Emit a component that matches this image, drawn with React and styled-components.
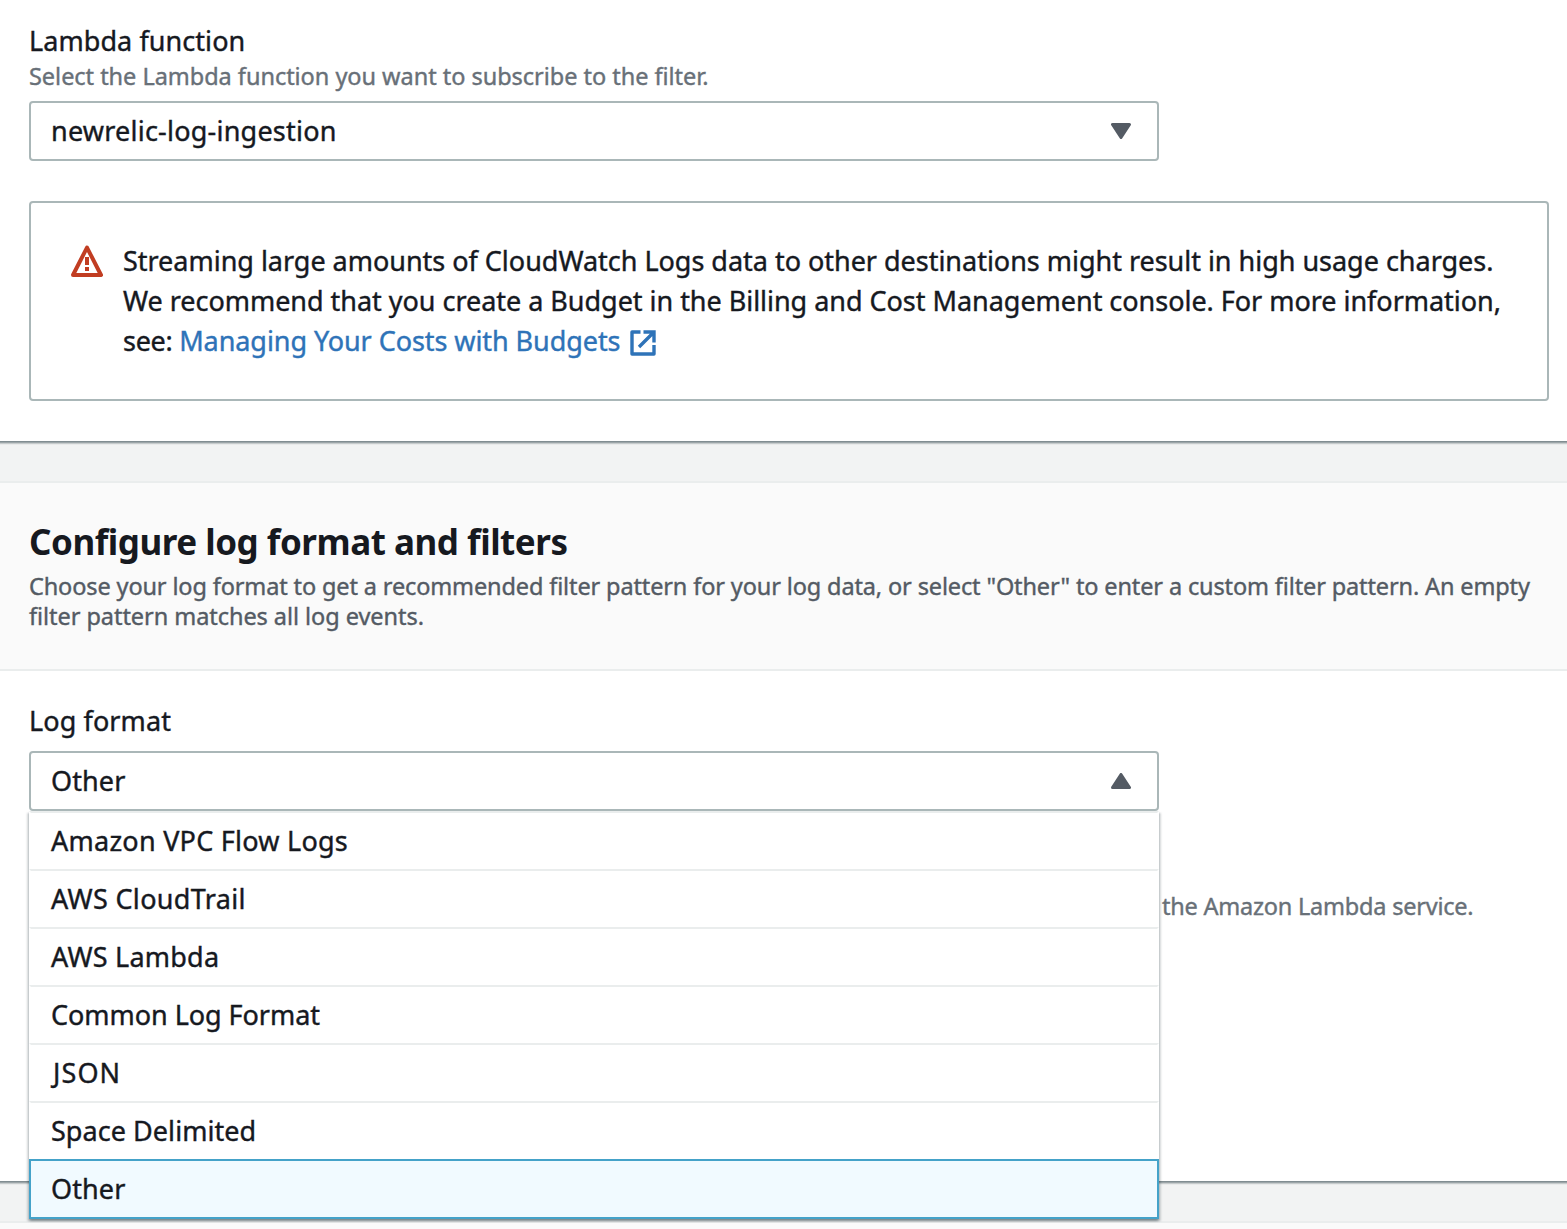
import React from 'react';
import styled, { createGlobalStyle, css } from 'styled-components';

const GlobalStyle = createGlobalStyle`
  * { box-sizing: border-box; }
  html, body { margin: 0; padding: 0; overflow: hidden; background: #f2f3f3; }
  body {
    font-family: "Noto Sans", "Open Sans", sans-serif;
    font-size: 27px;
    line-height: 40px;
    color: #16191f;
    -webkit-text-stroke: 0.4px currentColor;
  }
`;

const tracking = css`
  letter-spacing: ${(p) => p.$track || 0}px;
`;

const panelShadow = css`
  box-shadow: 0 2px 2px 0 rgba(0, 28, 36, 0.3), 2px 2px 2px 0 rgba(0, 28, 36, 0.15),
    -2px 2px 2px 0 rgba(0, 28, 36, 0.15);
`;

/* Panels bleed 10px past both window edges so their shadows run edge to edge. */
const Page = styled.main`
  height: 1229px;
  margin: 0 -10px;
  overflow: hidden;
  display: flex;
  flex-direction: column;
  gap: 40px;
`;

const Panel = styled.section`
  flex: none;
  background: #fff;
  ${panelShadow}
`;

const DestinationBody = styled.div`
  display: flex;
  flex-direction: column;
  padding: 21px 28px 40px 39px;
`;

const PanelHeader = styled.header`
  padding: 39px 39px 38px;
  border-top: 2px solid #eaeded;
  border-bottom: 2px solid #eaeded;
  background: #fafafa;
`;

const Title = styled.h2`
  margin: 0 0 9px;
  font-size: 35px;
  line-height: 40px;
  font-weight: 700;
  -webkit-text-stroke: 0;
  ${tracking}
`;

const Description = styled.p`
  margin: 0;
  font-size: 23.5px;
  line-height: 30px;
  color: #545b64;
  white-space: nowrap;
`;

const FormatBody = styled.div`
  height: 510px;
  padding: 30px 39px 0;
`;

const Label = styled.div`
  line-height: 40px;
  ${tracking}
`;

const Hint = styled.div`
  font-size: 23.5px;
  line-height: 30px;
  color: #687078;
  white-space: nowrap;
  ${tracking}
`;

const PatternHint = styled(Hint)`
  margin: 80px 0 0 1133px;
`;

const SelectWrap = styled.div`
  position: relative;
  width: 1130px;
  margin-top: 10px;
`;

const Select = styled.div`
  display: flex;
  align-items: center;
  justify-content: space-between;
  height: 60px;
  padding: 0 26px 0 20px;
  border: 2px solid #aab7b8;
  border-radius: 4px;
  background: #fff;
`;

const Text = styled.span`
  white-space: nowrap;
  ${tracking}
`;

const Caret = styled.svg`
  display: block;
  width: 20px;
  height: 16px;
  transform: ${(p) => (p.$open ? 'rotate(180deg)' : 'none')};
`;

const Menu = styled.ul`
  position: absolute;
  top: 60px;
  left: 0;
  right: 0;
  z-index: 1;
  margin: 0;
  padding: 0;
  list-style: none;
  background: #fff;
  ${panelShadow}
`;

const Option = styled.li`
  position: relative;
  display: flex;
  align-items: center;
  height: 60px;
  padding: 0 20px;
  border: 2px solid transparent;
  border-top-color: #eaeded;
  text-indent: ${(p) => p.$indent || 0}px;
  & + & {
    margin-top: -2px;
  }
  ${(p) =>
    p.$selected &&
    css`
      border-color: #44a2c9;
      background: #f1faff;
    `}
`;

const Alert = styled.div`
  display: flex;
  align-items: flex-start;
  gap: 20px;
  height: 200px;
  margin-top: 40px;
  padding: 38px 40px;
  border: 2px solid #aab7b8;
  border-radius: 4px;
`;

const WarningIcon = styled.svg`
  flex: none;
  width: 32px;
  height: 32px;
  margin-top: 4px;
`;

const AlertText = styled.p`
  margin: 0;
  white-space: nowrap;
`;

const Link = styled.a`
  color: #2e73b8;
  text-decoration: none;
  ${tracking}
`;

const ExternalIcon = styled.svg`
  width: 26px;
  height: 26px;
  margin-left: 10px;
  vertical-align: -5px;
`;

const OPTIONS = [
  { name: 'Amazon VPC Flow Logs', track: 0.25 },
  { name: 'AWS CloudTrail', track: 0.33 },
  { name: 'AWS Lambda', track: 0.23 },
  { name: 'Common Log Format', track: -0.04 },
  { name: 'JSON', track: 1.1, indent: 2 },
  { name: 'Space Delimited', track: 0.05 },
  { name: 'Other', track: 0.1, selected: true },
];

function SelectCaret({ open }) {
  return (
    <Caret $open={open} viewBox="0 0 20 16">
      <path d="M1.5 1.5h17L10 14.5z" fill="#545b64" stroke="#545b64" strokeWidth="3" strokeLinejoin="round" />
    </Caret>
  );
}

export default function App() {
  return (
    <>
      <GlobalStyle />
      <Page>
        <Panel>
          <DestinationBody>
            <Label $track={0.07}>Lambda function</Label>
            <Hint $track={-0.03}>Select the Lambda function you want to subscribe to the filter.</Hint>
            <SelectWrap>
              <Select>
                <Text $track={0.22}>newrelic-log-ingestion</Text>
                <SelectCaret />
              </Select>
            </SelectWrap>
            <Alert>
              <WarningIcon viewBox="0 0 32 32" fill="none">
                <path d="M16 2.6L30 30H2z" stroke="#c13d22" strokeWidth="4" strokeLinejoin="round" />
                <path d="M16 12v8M16 22v4" stroke="#c13d22" strokeWidth="4" />
              </WarningIcon>
              <AlertText>
                <Text $track={-0.02}>
                  Streaming large amounts of CloudWatch Logs data to other destinations might result in high usage charges.
                </Text>
                <br />
                <Text $track={-0.03}>
                  We recommend that you create a Budget in the Billing and Cost Management console. For more information,
                </Text>
                <br />
                <Text $track={-0.3}>see: </Text>
                <Link $track={-0.07}>Managing Your Costs with Budgets</Link>
                <ExternalIcon viewBox="0 0 26 26" fill="none" stroke="#2e73b8" strokeWidth="3.4">
                  <path d="M10.5 2H2v22h22v-9" strokeLinejoin="round" />
                  <path d="M13.5 2H24v10.5M24 2L9 17" />
                </ExternalIcon>
              </AlertText>
            </Alert>
          </DestinationBody>
        </Panel>

        <Panel>
          <PanelHeader>
            <Title $track={-0.47}>Configure log format and filters</Title>
            <Description>
              <Text $track={-0.13}>
                Choose your log format to get a recommended filter pattern for your log data, or select "Other" to enter
                a custom filter pattern. An empty
              </Text>
              <br />
              <Text $track={-0.05}>filter pattern matches all log events.</Text>
            </Description>
          </PanelHeader>
          <FormatBody>
            <Label $track={0.1}>Log format</Label>
            <SelectWrap>
              <Select>
                <Text $track={0.1}>Other</Text>
                <SelectCaret open />
              </Select>
              <Menu>
                {OPTIONS.map((o) => (
                  <Option key={o.name} $selected={o.selected} $indent={o.indent}>
                    <Text $track={o.track}>{o.name}</Text>
                  </Option>
                ))}
              </Menu>
            </SelectWrap>
            <PatternHint $track={-0.22}>the Amazon Lambda service.</PatternHint>
          </FormatBody>
        </Panel>

        <Panel>
          <PanelHeader />
        </Panel>
      </Page>
    </>
  );
}
